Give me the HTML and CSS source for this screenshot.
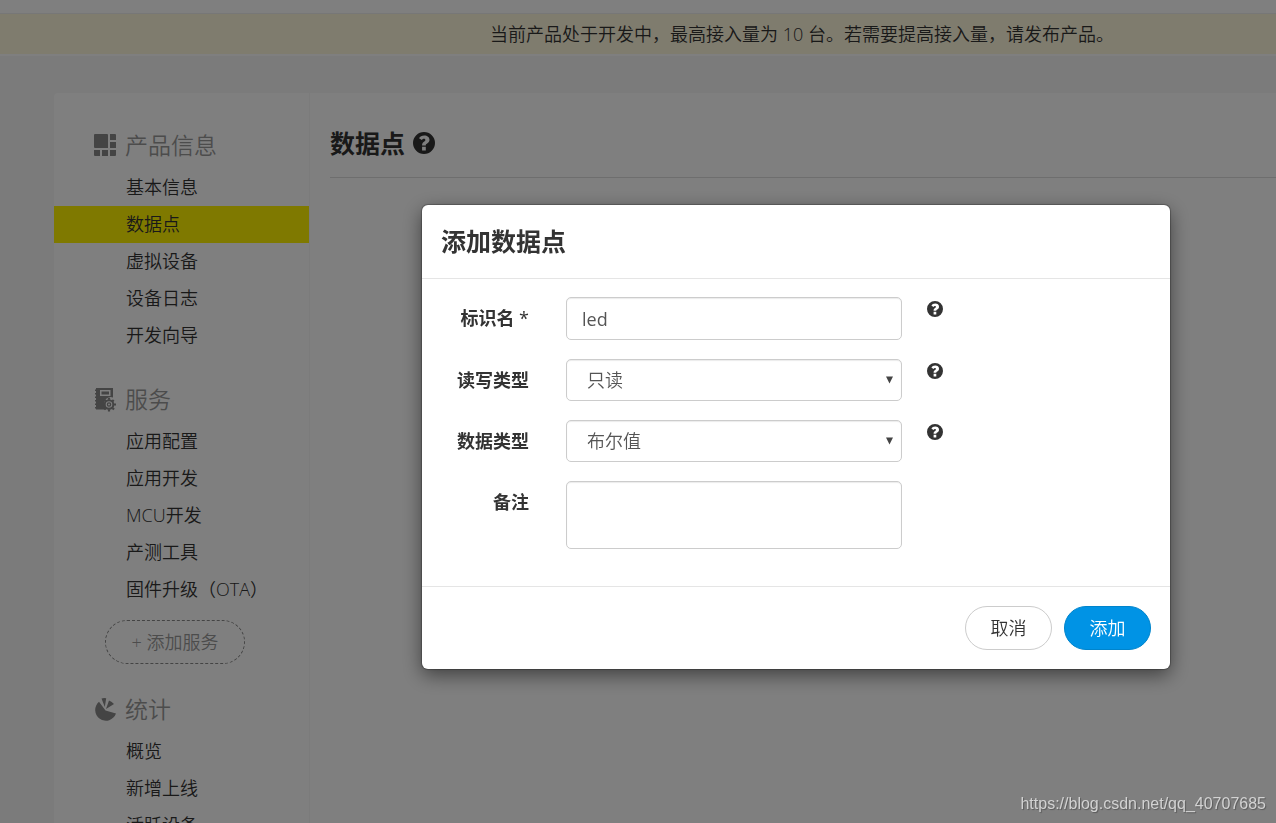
FILE: index.html
```html
<!DOCTYPE html>
<html lang="zh-CN">
<head>
<meta charset="utf-8">
<title>数据点</title>
<link rel="stylesheet" href="styles.css">
</head>
<body>
<svg class="sprite" aria-hidden="true">
  <symbol id="help" viewBox="0 0 16 16">
    <path fill="currentColor" fill-rule="evenodd" d="M8 0a8 8 0 1 0 0 16A8 8 0 0 0 8 0zM6.600 10.800h2.700v2.700H6.600zM8.200 2.500c2.200 0 3.800 1.200 3.800 3.200 0 1.400-.8 2.100-1.700 2.700-.8.500-1 .7-1 1.400H6.600v-.400c0-1.200.7-1.900 1.400-2.400.6-.4 1-.7 1-1.200 0-.6-.4-.9-1-.9-.7 0-1.100.3-1.600 1L4.400 4.500c.8-1.300 2-2 3.800-2z"/>
  </symbol>
</svg>

<header class="topbar"></header>
<div class="notice">当前产品处于开发中，最高接入量为 10 台。若需要提高接入量，请发布产品。</div>

<div class="page">
  <nav class="sidebar">
    <section class="group">
      <h2 class="group-title">
        <svg class="group-icon" viewBox="0 0 22 24" aria-hidden="true"><path fill="currentColor" d="M1 0h12q1 0 1 1v13H1q-1 0-1-1V1q0-1 1-1zM16 0h5q1 0 1 1v5h-6zM16 8h6v6h-6zM0 16h6v6H1q-1 0-1-1zM8 16h6v6H8zM16 16h6v5q0 1-1 1h-5z"/></svg>
        产品信息
      </h2>
      <ul class="menu">
        <li><a href="#">基本信息</a></li>
        <li><a href="#" class="active" aria-current="page">数据点</a></li>
        <li><a href="#">虚拟设备</a></li>
        <li><a href="#">设备日志</a></li>
        <li><a href="#">开发向导</a></li>
      </ul>
    </section>
    <section class="group">
      <h2 class="group-title">
        <svg class="group-icon" viewBox="-1 0 22 24" aria-hidden="true">
          <path fill="currentColor" fill-rule="evenodd" d="M1 0h17v9.500a6.500 6.500 0 0 0-8.500 8q.5 2.500 2 4H1v-1H0v-1.500h1v-2H0V15.500h1v-2H0V12h1v-2H0V8.500h1v-2H0V5h1V3H0V1.500h1zM5 2v6h10.500V2zm1.500 1.500h7.500v3H6.500z"/>
          <circle cx="14" cy="16.500" r="4.300" fill="none" stroke="currentColor" stroke-width="2"/>
          <circle cx="14" cy="16.500" r="1.600" fill="none" stroke="currentColor" stroke-width="1.300"/>
          <path stroke="currentColor" stroke-width="2.200" d="M14 9.800v2M14 21.200v2.300M7.500 16.500h2M18.500 16.500h2.500M9.500 12l1.500 1.500M17.500 20l1.500 1.500M18.700 12l-1.200 1.200M10.700 20l-1.500 1.500"/>
        </svg>
        服务
      </h2>
      <ul class="menu">
        <li><a href="#">应用配置</a></li>
        <li><a href="#">应用开发</a></li>
        <li><a href="#">MCU开发</a></li>
        <li><a href="#">产测工具</a></li>
        <li><a href="#">固件升级（OTA）</a></li>
      </ul>
      <button type="button" class="add-service">+ 添加服务</button>
    </section>
    <section class="group">
      <h2 class="group-title">
        <svg class="group-icon" viewBox="-1 0 22 24" aria-hidden="true">
          <path fill="currentColor" d="M4 3.800l6.500 8.700 10.500 3A10.700 10.700 0 1 1 4 3.800zM6.500.4Q8.500-.2 11.200.2L9.800 9zM14 2.500q3 1 5 3.500l-8 5z"/>
        </svg>
        统计
      </h2>
      <ul class="menu">
        <li><a href="#">概览</a></li>
        <li><a href="#">新增上线</a></li>
        <li><a href="#">活跃设备</a></li>
      </ul>
    </section>
  </nav>
  <main class="content">
    <h1 class="content-title">数据点 <svg class="title-help" role="img" aria-label="帮助"><use href="#help"/></svg></h1>
  </main>
</div>

<div class="overlay">
  <form class="dialog" role="dialog" aria-modal="true" aria-labelledby="dialog-title">
    <h2 class="dialog-title" id="dialog-title">添加数据点</h2>
    <div class="dialog-body">
      <div class="row">
        <label for="name">标识名 <span class="required">*</span></label>
        <input class="control" id="name" type="text" value="led">
        <svg class="help" role="img" aria-label="帮助"><use href="#help"/></svg>
      </div>
      <div class="row">
        <label for="access">读写类型</label>
        <div class="select">
          <select class="control" id="access"><option>只读</option></select>
          <svg class="arrow" viewBox="0 0 7 7" aria-hidden="true"><path fill="currentColor" d="M0 0h7L3.500 7z"/></svg>
        </div>
        <svg class="help" role="img" aria-label="帮助"><use href="#help"/></svg>
      </div>
      <div class="row">
        <label for="type">数据类型</label>
        <div class="select">
          <select class="control" id="type"><option>布尔值</option></select>
          <svg class="arrow" viewBox="0 0 7 7" aria-hidden="true"><path fill="currentColor" d="M0 0h7L3.500 7z"/></svg>
        </div>
        <svg class="help" role="img" aria-label="帮助"><use href="#help"/></svg>
      </div>
      <div class="row">
        <label for="remark">备注</label>
        <textarea class="control" id="remark"></textarea>
      </div>
    </div>
    <div class="dialog-footer">
      <button type="button" class="btn">取消</button>
      <button type="submit" class="btn primary">添加</button>
    </div>
  </form>
</div>
<div class="watermark">https://blog.csdn.net/qq_40707685</div>
</body>
</html>
```

FILE: styles.css
```css
* {
  box-sizing: border-box;
}

body {
  margin: 0;
  height: 100vh;
  overflow: hidden;
  background: #f6f6f6;
  color: #333;
  font: 350 18px/37px "Open Sans", "Noto Sans CJK SC", sans-serif;
}

button,
input,
select,
textarea {
  font: inherit;
  color: inherit;
}

h1,
h2,
ul {
  margin: 0;
  padding: 0;
}

.sprite {
  display: none;
}

.topbar {
  height: 14px;
  background: #fff;
  border-bottom: 1px solid #eee;
}

.notice {
  padding-left: 328px;
  border-bottom: 2px solid #fff;
  background: #fff8dc;
  line-height: 40px;
  text-align: center;
  white-space: nowrap;
}

.page {
  display: flex;
  margin: 37px 0 0 54px;
}

.sidebar {
  flex: none;
  width: 256px;
  padding-top: 35px;
  border-right: 1px solid #f6f6f6;
  border-radius: 4px 0 0 0;
  background: #fff;
}

.group {
  margin-bottom: 28px;
}

.group-title {
  display: flex;
  align-items: center;
  gap: 9px;
  margin-bottom: 6px;
  padding-left: 40px;
  color: #999;
  font-size: 23px;
  font-weight: 350;
  line-height: 35px;
}

.group-icon {
  width: 22px;
  height: 24px;
  color: #888;
}

.menu {
  list-style: none;
}

.menu a {
  display: block;
  padding-left: 72px;
  color: inherit;
  text-decoration: none;
}

.menu .active {
  background: #fff200;
}

.add-service {
  display: block;
  width: 140px;
  height: 44px;
  margin: 12px 0 0 51px;
  border: 1px dashed #888;
  border-radius: 22px;
  background: none;
  color: #999;
}

.content {
  flex: 1;
  padding: 31px 0 0 20px;
  background: #fff;
}

.content-title {
  display: flex;
  align-items: center;
  gap: 8px;
  padding-bottom: 15px;
  border-bottom: 1px solid #ddd;
  font-size: 25px;
  font-weight: 700;
  line-height: 38px;
}

.title-help {
  width: 22px;
  height: 22px;
}

.overlay {
  position: fixed;
  inset: 0;
  display: flex;
  align-items: flex-start;
  justify-content: center;
  padding: 205px 0 0 316px;
  background: rgba(0, 0, 0, 0.5);
}

.dialog {
  width: 748px;
  border-radius: 6px;
  background: #fff;
  box-shadow: 0 0 1px 1px rgba(0, 0, 0, 0.25), 0 6px 19px rgba(0, 0, 0, 0.5);
}

.dialog-title {
  padding: 18px 19px;
  border-bottom: 1px solid #e5e5e5;
  font-size: 25px;
  font-weight: 700;
}

.dialog-body {
  display: grid;
  gap: 19px;
  padding: 18px 20px 37px;
}

.row {
  display: grid;
  grid-template-columns: 87px 336px 16px;
  column-gap: 37px;
  align-items: start;
}

.row label {
  padding-top: 3px;
  font-weight: 700;
  text-align: right;
}

.required {
  font-weight: 400;
}

.control {
  display: block;
  width: 100%;
  height: 42px;
  padding: 0 15px;
  border: 1px solid #ccc;
  border-radius: 5px;
  background: #fff;
  box-shadow: inset 0 1px 1px rgba(0, 0, 0, 0.08);
  color: #555;
}

input.control {
  height: 43px;
  font-weight: 400;
}

textarea.control {
  height: 68px;
  resize: none;
}

.select {
  position: relative;
}

select.control {
  padding-left: 20px;
  appearance: none;
}

.arrow {
  position: absolute;
  top: 17px;
  right: 9px;
  width: 7px;
  height: 8px;
  color: #444;
  pointer-events: none;
}

.help {
  width: 16px;
  height: 16px;
  margin: 4px 0 0 -12px;
}

.dialog-footer {
  display: flex;
  justify-content: flex-end;
  gap: 12px;
  padding: 19px;
  border-top: 1px solid #e5e5e5;
}

.btn {
  width: 87px;
  height: 44px;
  padding: 0;
  border: 1px solid #ccc;
  border-radius: 22px;
  background: #fff;
}

.primary {
  border-color: #0084cc;
  background: #0093e5;
  color: #fff;
}

.watermark {
  position: fixed;
  right: 10px;
  bottom: 8px;
  color: #d2d2d2;
  font: 16px/22px "Liberation Sans", sans-serif;
  text-shadow: 1px 1px 1px rgba(0, 0, 0, 0.3);
}
```
